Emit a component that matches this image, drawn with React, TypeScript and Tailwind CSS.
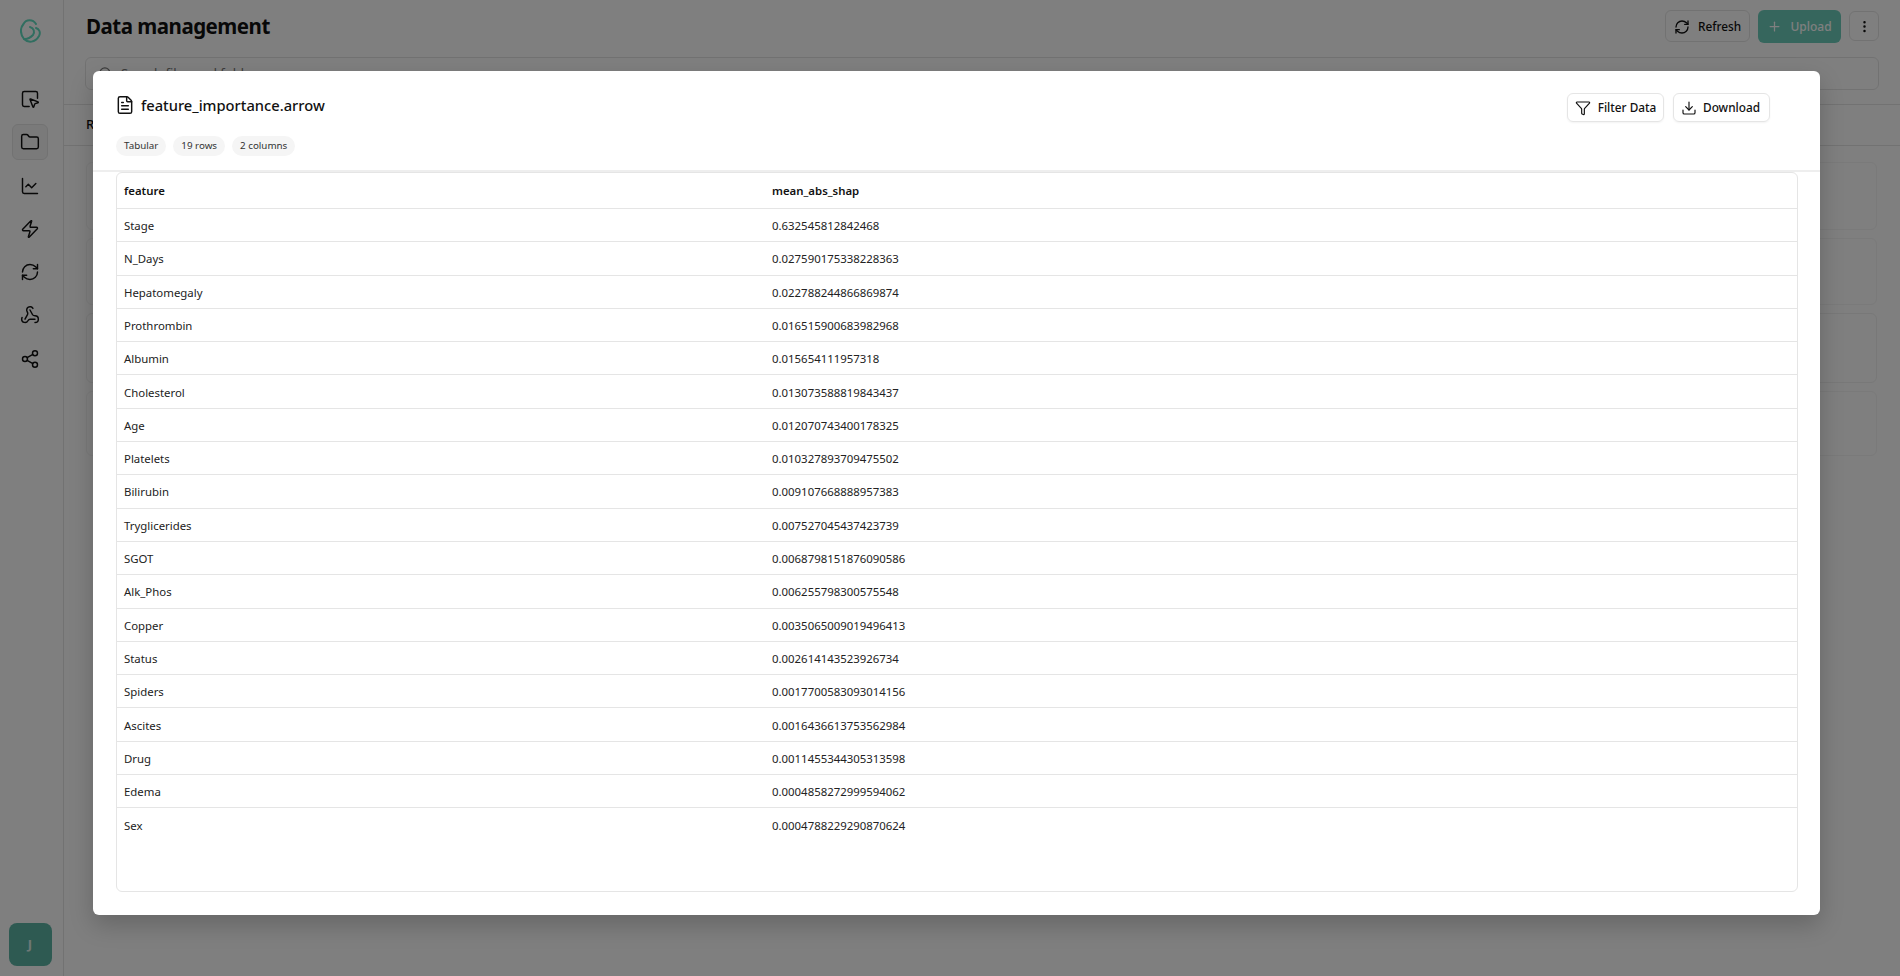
import { ChartLine, Download, EllipsisVertical, FileText, Funnel, Folder, Plus, RefreshCw, Search, Share2, SquareMousePointer, Webhook, Zap } from "lucide-react";

const rows = [
  ["Stage", "0.632545812842468"],
  ["N_Days", "0.027590175338228363"],
  ["Hepatomegaly", "0.022788244866869874"],
  ["Prothrombin", "0.016515900683982968"],
  ["Albumin", "0.015654111957318"],
  ["Cholesterol", "0.013073588819843437"],
  ["Age", "0.012070743400178325"],
  ["Platelets", "0.010327893709475502"],
  ["Bilirubin", "0.009107668888957383"],
  ["Tryglicerides", "0.007527045437423739"],
  ["SGOT", "0.0068798151876090586"],
  ["Alk_Phos", "0.006255798300575548"],
  ["Copper", "0.0035065009019496413"],
  ["Status", "0.002614143523926734"],
  ["Spiders", "0.0017700583093014156"],
  ["Ascites", "0.0016436613753562984"],
  ["Drug", "0.0011455344305313598"],
  ["Edema", "0.0004858272999594062"],
  ["Sex", "0.0004788229290870624"],
];

const navIcons = [SquareMousePointer, Folder, ChartLine, Zap, RefreshCw, Webhook, Share2];

const Logo = () => (
  <svg className="ml-[3px]" width="24" height="24" viewBox="0 0 24 24" fill="none" stroke="#62dcc0" strokeWidth="2" strokeLinecap="round">
    <path d="M16 5C13 0 6 0 3.5 5C0 9 0 15 4 20" />
    <path d="M4 20C8 24 15 24 19 17C21 13 19 10 16 9" />
    <path d="M10 8C14 9 15 13 13 16C11 18 8 20 5 20" />
  </svg>
);

const App = () => {
  return (
    <div className="relative flex h-[976px] overflow-hidden bg-white font-['Noto_Sans',sans-serif] text-[#111]">
      <aside className="flex w-[64px] shrink-0 flex-col items-center border-r border-[#e5e5e5] pt-[19px] pr-[3px] pb-[10px]">
        <Logo />
        <nav className="mt-[38px] flex flex-col gap-[7.3px]">
          {navIcons.map((Icon, i) => (
            <div
              key={i}
              className={`flex size-[36px] items-center justify-center rounded-md ${i === 1 ? "border border-[#e5e5e5] bg-[#f5f5f5]" : ""}`}
            >
              <Icon size={20} strokeWidth={1.75} />
            </div>
          ))}
        </nav>
        <div className="mt-auto flex size-[43px] items-center justify-center rounded-lg bg-[#5cb5a5] text-[13px] font-bold text-white/80">J</div>
      </aside>

      <main className="flex-1">
        <header className="flex h-[52px] items-center justify-between pr-[21px] pl-[22px]">
          <h1 className="text-[20.5px] font-bold tracking-[-0.5px]">Data management</h1>
          <div className="flex items-center gap-2">
            <button className="flex h-[32px] w-[85px] items-center justify-center gap-[8px] rounded-md border border-[#e5e5e5] pt-[1px] text-[11.8px] font-medium">
              <RefreshCw size={16} />
              Refresh
            </button>
            <button className="flex h-[33px] w-[83px] items-center justify-center gap-[8px] rounded-md bg-[#6ccdbb] pt-[1px] text-[12px] font-medium text-white">
              <Plus size={15} />
              Upload
            </button>
            <button className="flex size-[30px] items-center justify-center rounded-md border border-[#e5e5e5]">
              <EllipsisVertical size={15} />
            </button>
          </div>
        </header>
        <div className="mt-[5px] mr-[21px] ml-[21px] flex h-[33px] items-center gap-2 rounded-md border border-[#e5e5e5] px-3 text-[13px] text-[#777]">
          <Search size={15} />
          Search files and folders
        </div>
        <div className="mt-[14px] flex h-[42px] items-center border-y border-[#e5e5e5] px-[22px] text-[13px] font-medium">Recent</div>
        {/* file rows behind the dialog, only their right ends show */}
        <div className="mt-[16px] mr-[23px] ml-[22px] flex flex-col gap-[8px]">
          <div className="h-[68px] rounded-md border border-[#f4f4f4]" />
          <div className="h-[67px] rounded-md border border-[#f4f4f4]" />
          <div className="h-[70px] rounded-md border border-[#f0f0f0]" />
          <div className="h-[65px] rounded-md border border-[#f4f4f4]" />
        </div>
      </main>

      {/* dimmed overlay */}
      <div className="absolute inset-0 bg-black/50" />

      {/* dialog */}
      <div className="absolute top-[71px] left-[93px] flex h-[844px] w-[1727px] flex-col rounded-md bg-white shadow-[0_10px_25px_rgba(0,0,0,0.2)]">
        <div className="relative h-[101px] shrink-0 border-b-2 border-[#eeeeee] px-[23px]">
          <div className="-ml-[1px] flex items-center gap-[6px] pt-[24px]">
            <FileText size={20} strokeWidth={1.75} />
            <span className="text-[14.7px] leading-[20px] font-medium">feature_importance.arrow</span>
          </div>
          <div className="mt-[21px] flex gap-[7px] text-[9.8px] leading-[20px] text-[#333]">
            <span className="rounded-full bg-[#f5f5f5] px-[8px]">Tabular</span>
            <span className="rounded-full bg-[#f5f5f5] px-[8px]">19 rows</span>
            <span className="rounded-full bg-[#f5f5f5] px-[8px]">2 columns</span>
          </div>
          <div className="absolute top-[22px] right-[50px] flex gap-[9px]">
            <button className="flex h-[29px] w-[97px] items-center justify-center gap-[7px] rounded-md border border-[#e5e5e5] text-[11.8px] font-medium shadow-xs">
              <Funnel size={16} strokeWidth={1.75} />
              Filter Data
            </button>
            <button className="flex h-[29px] w-[97px] items-center justify-center gap-[6px] rounded-md border border-[#e5e5e5] pr-[2px] text-[11.8px] font-medium shadow-xs">
              <Download size={16} strokeWidth={1.75} />
              Download
            </button>
          </div>
        </div>
        <div className="mr-[22px] mb-[23px] ml-[23px] flex-1 overflow-hidden rounded-md border border-[#e5e5e5]">
          <div className="flex h-[36px] items-center border-b border-[#e5e5e5] text-[11.4px] font-semibold">
            <div className="w-[655px] pl-[7px]">feature</div>
            <div>mean_abs_shap</div>
          </div>
          {rows.map(([name, value], i) => (
            <div key={name} className={`flex h-[33.3px] items-center pt-[1px] text-[11.4px] text-[#222] ${i < rows.length - 1 ? "border-b border-[#e5e5e5]" : ""}`}>
              <div className="w-[655px] pl-[7px]">{name}</div>
              <div>{value}</div>
            </div>
          ))}
        </div>
      </div>
    </div>
  );
};

export default App;
